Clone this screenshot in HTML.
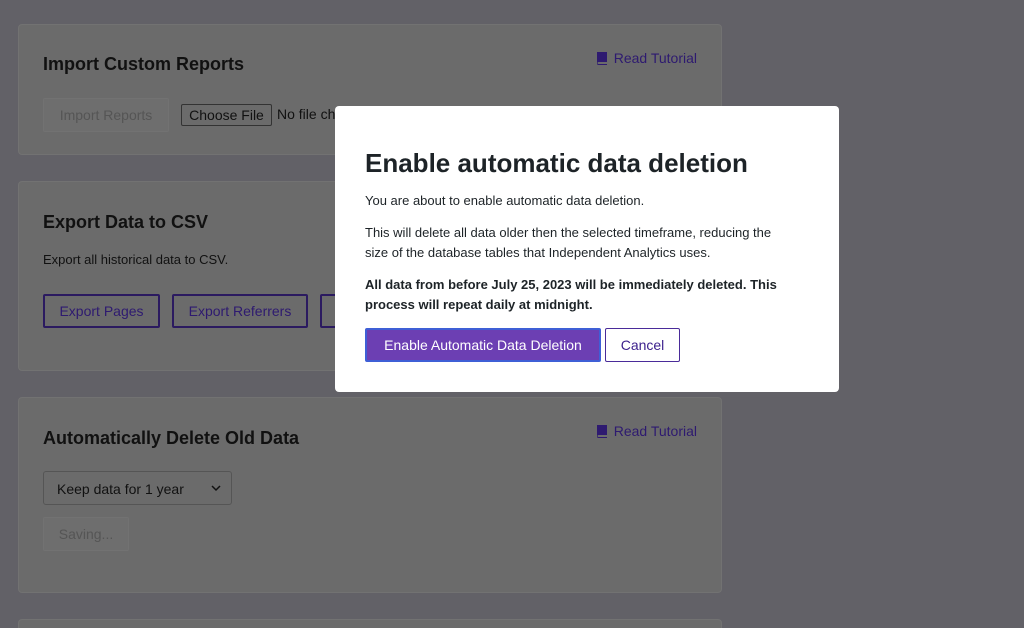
<!DOCTYPE html>
<html><head><style>
*{box-sizing:border-box;margin:0;padding:0}
html,body{width:1024px;height:628px;overflow:hidden}
body{background:#626167;font-family:"Liberation Sans",sans-serif;position:relative}
.card{position:absolute;left:18px;width:704px;background:#6b6b6b;border:1px solid #727272;border-radius:4px}
.card h2{position:absolute;left:24px;font-size:18px;font-weight:bold;color:#111}
.rt{position:absolute;right:24px;font-size:14px;color:#2e1a70;display:flex;align-items:center;gap:6px}
.btn{position:absolute;height:34px;font-size:14px;display:flex;align-items:center;justify-content:center;border-radius:2px}
.dis{border:1px solid #727272;color:#555;background:#6e6e6e}
.ex{border:2px solid #2b1a60;color:#2e1a70}
.modal{position:absolute;left:335px;top:106px;width:504px;height:286px;background:#fff;border-radius:4px}
.modal h1{position:absolute;left:30px;top:42px;font-size:26px;font-weight:bold;color:#1d2327}
.modal p{position:absolute;left:30px;font-size:13px;line-height:19.5px;color:#1d2327;width:425px}
</style></head><body>
<div class="card" style="top:24px;height:131px">
<h2 style="top:29px">Import Custom Reports</h2>
<div class="rt" style="top:25px"><svg width="12" height="14" viewBox="0 0 12 14"><path d="M1 1h10v10H2.5a1 1 0 0 0 0 2H11v1H2.5A1.5 1.5 0 0 1 1 12.5z" fill="#2e1a70"/></svg>Read Tutorial</div>
<div class="btn dis" style="left:24px;top:73px;width:126px">Import Reports</div>
<div style="position:absolute;left:162px;top:79px;width:91px;height:22px;border:1px solid #333;border-radius:2px;background:#6b6b6b;font-size:14px;color:#111;display:flex;align-items:center;justify-content:center">Choose File</div>
<div style="position:absolute;left:258px;top:81px;font-size:14px;color:#111">No file chosen</div>
</div>
<div class="card" style="top:181px;height:190px">
<h2 style="top:30px">Export Data to CSV</h2>
<div style="position:absolute;left:24px;top:70px;font-size:13px;color:#111">Export all historical data to CSV.</div>
<div class="btn ex" style="left:24px;top:112px;width:117px">Export Pages</div>
<div class="btn ex" style="left:153px;top:112px;width:136px">Export Referrers</div>
<div class="btn ex" style="left:301px;top:112px;width:120px"></div>
</div>
<div class="card" style="top:397px;height:196px">
<h2 style="top:30px">Automatically Delete Old Data</h2>
<div class="rt" style="top:25px"><svg width="12" height="14" viewBox="0 0 12 14"><path d="M1 1h10v10H2.5a1 1 0 0 0 0 2H11v1H2.5A1.5 1.5 0 0 1 1 12.5z" fill="#2e1a70"/></svg>Read Tutorial</div>
<div style="position:absolute;left:24px;top:73px;width:189px;height:34px;border:1px solid #555;border-radius:3px;font-size:14px;color:#111;padding:9px 13px">Keep data for 1 year<svg style="position:absolute;right:10px;top:13px" width="10" height="7" viewBox="0 0 10 7"><path d="M1 1l4 4 4-4" stroke="#111" stroke-width="1.5" fill="none"/></svg></div>
<div class="btn dis" style="left:24px;top:119px;width:86px">Saving...</div>
</div>
<div class="card" style="top:619px;height:40px"></div>
<div class="modal">
<h1>Enable automatic data deletion</h1>
<p style="top:85px">You are about to enable automatic data deletion.</p>
<p style="top:117px">This will delete all data older then the selected timeframe, reducing the size of the database tables that Independent Analytics uses.</p>
<p style="top:169px;font-weight:bold">All data from before July 25, 2023 will be immediately deleted. This process will repeat daily at midnight.</p>
<div class="btn" style="left:30px;top:222px;width:236px;background:#6c3fb3;border:2px solid #3f5fd6;color:#fff">Enable Automatic Data Deletion</div>
<div class="btn" style="left:270px;top:222px;width:75px;border:1px solid #4a2b99;color:#3b1f8c">Cancel</div>
</div>
</body></html>
